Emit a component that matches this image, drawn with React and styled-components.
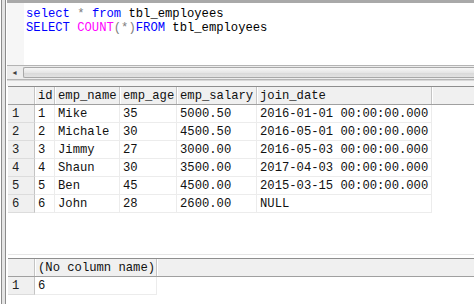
import React from "react";
import styled, { createGlobalStyle } from "styled-components";

const GlobalStyle = createGlobalStyle`
  html, body {
    margin: 0;
    padding: 0;
    background: #ffffff;
  }
  body {
    font-family: "Liberation Mono", "Courier New", monospace;
    font-size: 12.2px;
    color: #000;
  }
`;

const employees = [
  { id: 1, name: "Mike", age: 35, salary: "5000.50", date: "2016-01-01 00:00:00.000" },
  { id: 2, name: "Michale", age: 30, salary: "4500.50", date: "2016-05-01 00:00:00.000" },
  { id: 3, name: "Jimmy", age: 27, salary: "3000.00", date: "2016-05-03 00:00:00.000" },
  { id: 4, name: "Shaun", age: 30, salary: "3500.00", date: "2017-04-03 00:00:00.000" },
  { id: 5, name: "Ben", age: 45, salary: "4500.00", date: "2015-03-15 00:00:00.000" },
  { id: 6, name: "John", age: 28, salary: "2600.00", date: "NULL" },
];

const mainCols = [
  { key: "id", label: "id", width: 20 },
  { key: "name", label: "emp_name", width: 65 },
  { key: "age", label: "emp_age", width: 57 },
  { key: "salary", label: "emp_salary", width: 80 },
  { key: "date", label: "join_date", width: 175 },
];

function App() {
  return (
    <Window>
      <GlobalStyle />
      <Frame />
      <Content>
        <Editor>
          <Margin />
          <Code>
            <Line>
              <Kw>select</Kw> <Op>*</Op> <Kw>from</Kw> tbl_employees
            </Line>
            <Line>
              <Kw>SELECT</Kw> <Fn>COUNT</Fn>
              <Op>(*)</Op>
              <Kw>FROM</Kw> tbl_employees
            </Line>
          </Code>
        </Editor>
        <ScrollBar>
          <ArrowBtn>◂</ArrowBtn>
          <Thumb />
        </ScrollBar>
        <Splitter />
        <Results>
          <Grid>
            <HeaderRow>
              <RowHead $header />
              {mainCols.map((c) => (
                <HeadCell key={c.key} $w={c.width}>
                  {c.label}
                </HeadCell>
              ))}
              <HeadFill />
            </HeaderRow>
            {employees.map((e, i) => (
              <Row key={e.id}>
                <RowHead>{i + 1}</RowHead>
                {mainCols.map((c) => (
                  <Cell key={c.key} $w={c.width}>
                    {e[c.key]}
                  </Cell>
                ))}
              </Row>
            ))}
          </Grid>
          <GridGap />
          <Grid $second>
            <HeaderRow>
              <RowHead $header />
              <HeadCell $w={122}>(No column name)</HeadCell>
              <HeadFill />
            </HeaderRow>
            <Row>
              <RowHead>1</RowHead>
              <Cell $w={122}>6</Cell>
            </Row>
          </Grid>
        </Results>
      </Content>
    </Window>
  );
}

const Window = styled.div`
  display: flex;
  width: 474px;
  height: 304px;
  overflow: hidden;
  background: #fff;
`;

const Frame = styled.div`
  width: 3px;
  flex: none;
  background: #e4e4e4;
  border-left: 1px solid #8c8c8c;
  border-right: 1px solid #8c8c8c;
  margin-left: 1px;
`;

const Content = styled.div`
  flex: 1;
  display: flex;
  flex-direction: column;
  min-width: 0;
  padding-left: 1px;
`;

const Editor = styled.div`
  display: flex;
  height: 62px;
  border-top: 3px solid #a9a9a9;
  background: #fff;
`;

const Margin = styled.div`
  width: 17px;
  flex: none;
  background: #f6f6f6;
`;

const Code = styled.div`
  padding: 4px 0 0 2px;
  white-space: pre;
  line-height: 14px;
`;

const Line = styled.div`
  color: #000;
`;

const Kw = styled.span`
  color: #0000ff;
`;

const Op = styled.span`
  color: #808080;
`;

const Fn = styled.span`
  color: #ff00ff;
`;

const ScrollBar = styled.div`
  display: flex;
  height: 13px;
  border-top: 1px solid #b4b4b4;
  border-bottom: 1px solid #b4b4b4;
  background: #ececec;
`;

const ArrowBtn = styled.div`
  width: 15px;
  flex: none;
  display: flex;
  align-items: center;
  justify-content: center;
  font-family: "DejaVu Sans", sans-serif;
  font-size: 8px;
  color: #404040;
`;

const Thumb = styled.div`
  flex: 1;
  margin: 1px 0 1px 1px;
  border: 1px solid #a8a8a8;
  border-right: none;
  border-radius: 2px 0 0 2px;
  background: linear-gradient(#f6f6f6, #e6e6e6 50%, #d8d8d8 51%, #e2e2e2);
`;

const Splitter = styled.div`
  height: 5px;
  border-top: 1px solid #d8d8d8;
  background: #f4f4f4;
`;

const Results = styled.div`
  display: flex;
  flex-direction: column;
  flex: 1;
  background: #fff;
  padding-left: 1px;
`;

const Grid = styled.div`
  display: flex;
  flex-direction: column;
  ${(p) => p.$second && "border-top: 1px solid #e6e6e6; padding-top: 3px;"}
`;

const GridGap = styled.div`
  height: 41px;
`;

const HeaderRow = styled.div`
  display: flex;
  height: 17px;
  border-top: 1px solid #8e8e8e;
  border-bottom: 1px solid #a0a0a0;
  background: #f0f0f0;
`;

const Row = styled.div`
  display: flex;
  height: 18px;
`;

const RowHead = styled.div`
  width: 27px;
  flex: none;
  padding-left: 4px;
  box-sizing: border-box;
  display: flex;
  align-items: center;
  background: #f0f0f0;
  border-right: 1px solid #c4c4c4;
  border-bottom: ${(p) => (p.$header ? "none" : "1px solid #dcdcdc")};
  color: #222;
`;

const HeadCell = styled.div`
  width: ${(p) => p.$w}px;
  flex: none;
  box-sizing: border-box;
  padding-left: 2px;
  display: flex;
  align-items: center;
  border-right: 1px solid #c4c4c4;
  border-left: 1px solid #ffffff;
  white-space: nowrap;
  overflow: hidden;
  color: #111;
`;

const HeadFill = styled.div`
  flex: 1;
  border-left: 1px solid #ffffff;
`;

const Cell = styled.div`
  width: ${(p) => p.$w}px;
  flex: none;
  box-sizing: border-box;
  padding-left: 3px;
  display: flex;
  align-items: center;
  border-right: 1px solid #ececec;
  border-bottom: 1px solid #ececec;
  white-space: nowrap;
  overflow: hidden;
  color: #111;
`;

export default App;
